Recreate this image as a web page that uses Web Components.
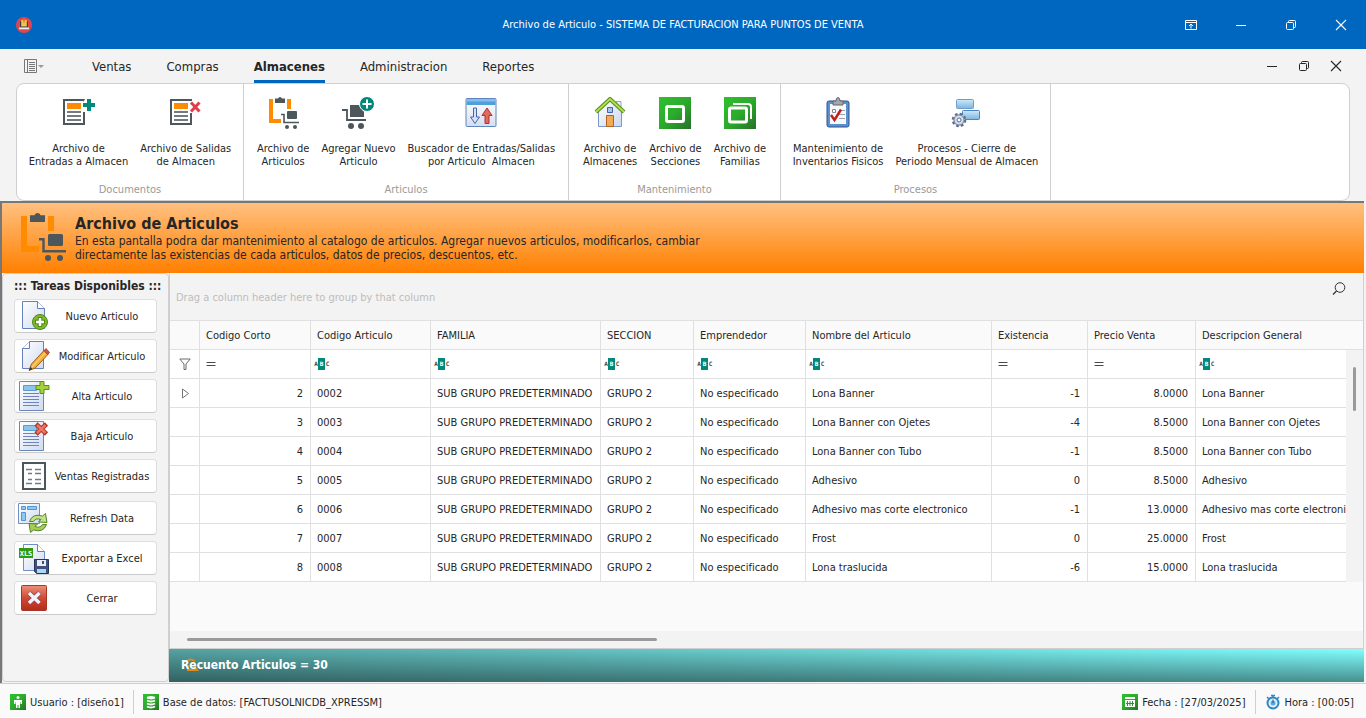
<!DOCTYPE html>
<html lang="es">
<head>
<meta charset="utf-8">
<title>Archivo de Articulo - SISTEMA DE FACTURACION PARA PUNTOS DE VENTA</title>
<style>
  html, body {
    margin: 0;
  }
  body {
    --line: #e0e0e0;
    --edge: #cfcfcf;
    --accent: #0067c0;
    font-family: "DejaVu Sans Condensed", "DejaVu Sans", sans-serif;
    font-size: 11px;
    line-height: 13px;
    color: #262626;
    background: #f3f3f3;
  }
</style>
</head>
<body>
<app-window></app-window>

<script>
const DARK = "#4d565b";

const PAGE = `
  <path d="M1 3h20v24H1z" fill="#fff" stroke="${DARK}" stroke-width="2"/>
  <path d="M4 6h14v6H4z" fill="#ff8c00"/>
  <path d="M4 15h14M4 19h14M4 23h14" stroke="#727b84" stroke-width="2"/>`;

const SHEET = `
  <linearGradient id="s" x2="1" y2="1"><stop stop-color="#fff"/><stop offset="1" stop-color="#cfdbf0"/></linearGradient>`;

const LIST = `${SHEET}
  <path d="M1.500 1.500h24v29h-24z" fill="url(#s)" stroke="#6a86bd"/>
  <path d="M5.500 5.500h13v5h-13z" fill="#8cc4ea" stroke="#5b9bd0"/>
  <path d="M5 13.500h16M5 16.500h16M5 19.500h16M5 22.500h16M5 25.500h16" stroke="#6c84b8"/>`;

const GREEN = `
  <linearGradient id="g" x2="1" y2="1"><stop stop-color="#30c030"/><stop offset=".5" stop-color="#2bab2b"/><stop offset="1" stop-color="#287028"/></linearGradient>`;

// [board size, shapes]
const ICONS = {
    logo: [16, `<circle cx="8" cy="8" r="8" fill="#e0444c"/><path d="M4 4.500h8v6H4z" fill="#33424e"/>
      <path d="M5.200 3h5.600v6.500H5.200z" fill="#f7c04a"/><path d="M7 2.500h2v3H7z" fill="#d8922e"/><path d="M3 10.500h10v1.800H3z" fill="#e8edf2"/>`],
    menu: [20, `<path d="M.5 3.500h12v13H.5zM3.500 3.500v13" fill="none" stroke="#777"/>
      <path d="M5 6.500h6M5 8.500h6M5 10.500h6M5 12.500h6M5 14.500h6" stroke="#777"/><path d="M14 9h6l-3 3z" fill="#999"/>`],
    ribbon: [12, `<path d="M.5 1.500h11v9H.5zM.5 3.500h11" fill="none" stroke="currentColor"/><path d="M6 9.500v-4M4 7l2-2 2 2" fill="none" stroke="currentColor"/>`],
    min: [12, `<path d="M1 6.500h10" stroke="currentColor"/>`],
    restore: [12, `<rect x="1.500" y="3.500" width="7" height="7" rx="1" fill="none" stroke="currentColor"/><path d="M3.500 3V2.500a1 1 0 0 1 1-1h5a1 1 0 0 1 1 1v5a1 1 0 0 1-1 1H9" fill="none" stroke="currentColor"/>`],
    close: [12, `<path d="M1 1l10 10M11 1L1 11" stroke="currentColor" stroke-width="1.100"/>`],
    entradas: [32, `${PAGE}<path d="M19 5h13v6H19zM23 1h5v14h-8V5z" fill="#fff"/><path d="M20 8h12M26 2v12" stroke="#00897b" stroke-width="4"/>`],
    salidas: [32, `${PAGE}<path d="M19 4h12v12H19z" fill="#fff"/><path d="M21 5.500l8.500 9M29.500 5.500l-8.500 9" stroke="#e0404c" stroke-width="3"/>`],
    articulos: [32, `<path d="M2 2h4v20h8v4H2zM20 2h4v10h-4z" fill="#ff8c00"/><path d="M8 6V1.500h3Q11.500 0 13 0t2 1.500h3V6z" fill="${DARK}"/>
      <path fill="none" stroke="${DARK}" stroke-width="1.600" d="M14 17.500h3v8h15"/><rect x="20" y="14" width="10" height="8" rx="1" fill="${DARK}"/>
      <circle cx="20" cy="30" r="2" fill="${DARK}"/><circle cx="28" cy="30" r="2" fill="${DARK}"/>`],
    agregar: [32, `<path fill="none" stroke="${DARK}" stroke-width="1.800" d="M0 13h5v10h19"/><path d="M8 8h9l5 7v5H8z" fill="${DARK}"/>
      <circle cx="9" cy="29" r="3" fill="${DARK}"/><circle cx="19" cy="29" r="3" fill="${DARK}"/>
      <circle cx="25" cy="7" r="7.500" fill="#00897b" stroke="#fff"/><path d="M20.500 7h9M25 2.500v9" stroke="#fff" stroke-width="2"/>`],
    buscador: [32, `<linearGradient id="b" y2="1" x2="0"><stop stop-color="#fff"/><stop offset="1" stop-color="#d5def0"/></linearGradient>
      <rect x="1" y="1.500" width="30" height="28" rx="1" fill="url(#b)" stroke="#5f85bd"/><path d="M1.500 2h29v6h-29z" fill="#4f9fdc"/><path d="M1.500 2h29v2.500h-29z" fill="#83bfe9"/>
      <path d="M8.500 11h3v9h3L10 26.500 5.500 20h3z" fill="#d6e2f8" stroke="#4565a5"/><path d="M20 26.500h4v-8h3L22 11l-5 7.500h3z" fill="#e06a5c" stroke="#b03030"/>`],
    casa: [32, `<linearGradient id="h" x2="1" y2="1"><stop stop-color="#fff"/><stop offset="1" stop-color="#cbd8ef"/></linearGradient>
      <path d="M22 4.500h5v10h-5z" fill="#eef3fb" stroke="#8fa5cf"/><path d="M4.500 14L16 3l11.500 11v15.500h-23z" fill="url(#h)" stroke="#7f97c8"/>
      <path d="M2 15L16 2l14 13" fill="none" stroke="#56901c" stroke-width="4"/><path d="M2 15L16 2l14 13" fill="none" stroke="#b6e04e" stroke-width="1.800"/>
      <path d="M13.500 10.500h5v5h-5z" fill="#a9c4ea" stroke="#4664a5"/><path d="M12.500 18.500h7v11h-7z" fill="#f3aa58" stroke="#b4641a"/>`],
    secciones: [32, `${GREEN}<path d="M0 0h32v32H0z" fill="url(#g)"/><rect x="7.500" y="9.500" width="17" height="15" rx="1.500" fill="none" stroke="#fff" stroke-width="3"/>`],
    familias: [32, `${GREEN}<path d="M0 0h32v32H0z" fill="url(#g)"/><rect x="5.500" y="11" width="17" height="14" rx="1.500" fill="none" stroke="#fff" stroke-width="3"/>
      <path d="M9 7h15q3 0 3 3v12" fill="none" stroke="#fff" stroke-width="2"/>`],
    inventario: [32, `<rect x="5" y="4" width="22" height="26" rx="2" fill="#5a8fd0" stroke="#31538f"/><path d="M8 7h16v20H8z" fill="#f7f9fd"/>
      <path d="M11 8V4h3q0-3.500 2-3.500T18 4h3v4z" fill="#a3a7ad" stroke="#666"/><path d="M17 13.500h6M17 17.500h6M17 21.500h6" stroke="#9aa0a8"/>
      <path d="M10.500 12.500h3v3h-3z" fill="#fff" stroke="#888"/><path d="M9 18l3.500 5L19 12.500" fill="none" stroke="#c3201c" stroke-width="2.500"/>`],
    procesos: [32, `<linearGradient id="p" x2="0" y2="1"><stop stop-color="#cdeafa"/><stop offset="1" stop-color="#7db4e0"/></linearGradient>
      <rect x="5.500" y="2.500" width="17" height="9" rx="1" fill="url(#p)" stroke="#6d9ed0"/><rect x="11.500" y="13.500" width="17" height="9" rx="1" fill="url(#p)" stroke="#4b85c4"/>
      <circle cx="8" cy="23" r="6" fill="#c6d1e4" stroke="#5e6e8c" stroke-width="2.600" stroke-dasharray="2.600 2.100"/>
      <circle cx="8" cy="23" r="5" fill="#d5deed" stroke="#7484a2"/><circle cx="8" cy="23" r="2" fill="#fff" stroke="#5e6e8c"/>`],
    nuevo: [32, `${SHEET}<path d="M4.500 1.500h15l7 7v20h-22z" fill="url(#s)" stroke="#6580bb"/><path d="M19.500 1.500v7h7" fill="#fff" stroke="#6580bb"/>
      <circle cx="22" cy="22" r="7.500" fill="#7fba2c" stroke="#4c8a12"/><path d="M17 22h10M22 17v10" stroke="#4c8a12" stroke-width="4.500"/><path d="M18 22h8M22 18v8" stroke="#fff" stroke-width="2.500"/>`],
    modificar: [32, `${SHEET}<path d="M11.500 1.500h14v27h-21v-20z" fill="url(#s)" stroke="#6580bb"/><path d="M11.500 1.500v7h-7" fill="#fff" stroke="#6580bb"/>
      <path d="M11 30.500l2.500-6.500 13-14 3.800 4-13 14z" fill="#f4b23c" stroke="#9a5d14"/><path d="M26 10.500l2-2 3.500 4-2 2z" fill="#d2554c" stroke="#8c3530" stroke-width=".8"/><path d="M14 27L27 13" stroke="#fbe09a"/><path d="M11 30.500l1.500-3.500 2 2z" fill="#333"/>`],
    alta: [32, `${LIST}<path d="M22 1.500h4v4h5v4h-5v4h-4v-4h-4v-4h4z" fill="#a3d23c" stroke="#588f14"/>`],
    baja: [32, `${LIST}<path d="M18 4l10.500 10M28.500 4L18 14" stroke="#b03524" stroke-width="4.500"/><path d="M19 5l8.500 8M27.500 5L19 13" stroke="#ef7563" stroke-width="2.500"/>`],
    ventas: [32, `<path d="M5 3h22v26H5z" fill="#fff" stroke="${DARK}" stroke-width="2"/><path d="M8 9.500h6M10 13.500h4M10 19.500h4M8 23.500h6M17 9.500h6M17 13.500h6M17 19.500h6M17 23.500h6" stroke="#727b84" stroke-width="1.600"/>`],
    refresh: [32, `${SHEET}<path d="M.5 1.500h21v20H.5z" fill="url(#s)" stroke="#6f8fc6"/><path d="M3.500 4.500h4v3h-4zM9.500 4.500h9v3h-9zM3.500 10.500h4v8h-4z" fill="#8cc8ef" stroke="#5596cf"/>
      <path d="M11.500 19.500q3-8.500 13-5.500l3-2.500 1.500 9-8.500-.5 2.500-2.500q-5-2-7.500 2z" fill="#c2e08e" stroke="#55852a"/><path d="M28.500 22.500q-3 8.500-13 5.500l-3 2.500-1.500-9 8.500.5-2.500 2.500q5 2 7.500-2z" fill="#a6cd52" stroke="#55852a"/>`],
    excel: [32, `${SHEET}<path d="M5.500 2.500h14l7 7v19h-21z" fill="url(#s)" stroke="#6f8fc6"/><path d="M19.500 2.500v7h7" fill="#fff" stroke="#6580bb"/>
      <path d="M1 6h14v10H1z" fill="#2f9a12"/><text x="8" y="14" font-family="DejaVu Sans Mono" font-size="7" font-weight="bold" text-anchor="middle" fill="#fff">XLS</text>
      <path d="M16.500 17.500h14v14h-12l-2-2z" fill="#40507c" stroke="#27345c"/><path d="M19 18h9v6h-9z" fill="#e6edf8"/><path d="M24 19h2v3h-2z" fill="#40507c"/><path d="M19 27h9v4h-9z" fill="#a8d8f6"/>`],
    cerrar: [32, `<linearGradient id="c" x2="0" y2="1"><stop stop-color="#ec9078"/><stop offset=".5" stop-color="#d04a34"/><stop offset="1" stop-color="#b52a1c"/></linearGradient>
      <rect x="3.500" y="3.500" width="25" height="25" rx="1" fill="url(#c)" stroke="#a63626"/><path d="M11 11l10.500 10M21.500 11L11 21" stroke="#8d3f4a" stroke-width="5"/><path d="M11 11l10.500 10M21.500 11L11 21" stroke="#f0f4fb" stroke-width="3.500"/>`],
    search: [16, `<circle cx="9" cy="6.500" r="4.800" fill="none" stroke="#333"/><path d="M5.500 10L2 13.500" stroke="#333" stroke-width="1.200"/>`],
    filter: [12, `<path d="M.8 1h10.400L7 6v5.500H5V6z" fill="none" stroke="#6b6b6b"/>`],
    equals: [10, `<path d="M.5 3.500h9M.5 6.500h9" stroke="#4a4a4a"/>`],
    abc: [16, `<path d="M4 2h7v12H4z" fill="#00897b"/><g font-family="DejaVu Sans Mono" font-size="6" font-weight="bold" text-anchor="middle"><text x="2" y="10" fill="#444">A</text><text x="7.500" y="10" fill="#fff">B</text><text x="13.500" y="10" fill="#444">C</text></g>`],
    arrow: [12, `<path d="M3.500 2l6 4.500-6 4.500z" fill="none" stroke="#777"/>`],
    swirl: [16, `<path d="M3 4q3-3 8 0M4 8v5h9l-3-4" fill="none" stroke="#e08b18" stroke-width="2"/>`],
    user: [16, `${GREEN}<path d="M0 0h16v16H0z" fill="url(#g)"/><circle cx="8" cy="3.500" r="1.500" fill="#fff"/><path d="M4 6h8v4h-1.500V8H10v6H8.500v-3h-1v3H6V8h-.5v2H4z" fill="#fff"/>`],
    db: [16, `${GREEN}<path d="M0 0h16v16H0z" fill="url(#g)"/><path d="M4 3.500q4 2 8 0M4 6.500q4 2 8 0M4 9.500q4 2 8 0M4 12.500q4 2 8 0" fill="none" stroke="#fff" stroke-width="1.800"/><ellipse cx="8" cy="3.500" rx="4" ry="1.500" fill="#fff"/>`],
    calendar: [16, `${GREEN}<path d="M0 0h16v16H0z" fill="url(#g)"/><path d="M3 3h10v2H3z" fill="#fff"/><path d="M3 6h10v7H3z" fill="#fff"/><path d="M5.500 7v5M8 7v5M10.500 7v5M4 9.500h8" stroke="#2a922a"/>`],
    clock: [16, `<circle cx="8" cy="9" r="5.500" fill="#e3f3fc" stroke="#2f86c3" stroke-width="2"/><path d="M6 1.500h4M8 1v3M2 3l2 2M14 3l-2 2" stroke="#2f86c3" stroke-width="1.500"/><circle cx="8" cy="9" r="2.500" fill="#57a9dc"/><path d="M8 5.500V9" stroke="#1d5f96"/>`]
};

class UiIcon extends HTMLElement {
    constructor() {
        super();
        this.attachShadow({mode: "open"});
    }

    connectedCallback() {
        const [box, shapes] = ICONS[this.getAttribute("name")];
        const size = this.getAttribute("size") || box;
        this.shadowRoot.innerHTML = `
        <style>
          :host{ display:inline-flex; flex:none; }
          svg{ display:block; }
        </style>
        <svg width="${size}" height="${size}" viewBox="0 0 ${box} ${box}" aria-hidden="true">${shapes}</svg>`;
    }
}
customElements.define("ui-icon", UiIcon);

class TitleBar extends HTMLElement {
    constructor() {
        super();
        this.attachShadow({mode: "open"}).innerHTML = `
        <style>
          :host{ display:grid; grid-template-columns:200px 1fr 200px; align-items:center; height:49px; background:var(--accent); color:#fff; }
          .logo{ padding-left:16px; display:flex; }
          h1{ margin:0; font-size:11px; font-weight:normal; text-align:center; }
          nav{ display:flex; }
          button{ flex:1; height:49px; border:0; padding:0; background:none; color:inherit; display:flex; align-items:center; justify-content:center; }
        </style>
        <span class="logo"><ui-icon name="logo"></ui-icon></span>
        <h1><slot></slot></h1>
        <nav>
          <button aria-label="Cinta"><ui-icon name="ribbon"></ui-icon></button>
          <button aria-label="Minimizar"><ui-icon name="min"></ui-icon></button>
          <button aria-label="Restaurar"><ui-icon name="restore"></ui-icon></button>
          <button aria-label="Salir"><ui-icon name="close"></ui-icon></button>
        </nav>`;
    }
}
customElements.define("title-bar", TitleBar);

class RibbonTabs extends HTMLElement {
    constructor() {
        super();
        this.attachShadow({mode: "open"});
    }

    connectedCallback() {
        const tabs = this.getAttribute("tabs").split(",");
        const active = this.getAttribute("active");
        this.shadowRoot.innerHTML = `
        <style>
          :host{ display:flex; align-items:stretch; height:34px; padding:0 14px 0 24px; }
          button{ border:0; padding:0; background:none; color:inherit; font:inherit; display:flex; align-items:center; justify-content:center; }
          .tabs{ display:flex; flex:1; gap:35px; margin-left:48px; }
          .tabs button{ font-size:13px; border-top:3px solid transparent; border-bottom:3px solid transparent; }
          .tabs .on{ font-weight:bold; border-bottom-color:var(--accent); }
          .win{ width:32px; }
        </style>
        <button aria-label="Menu"><ui-icon name="menu"></ui-icon></button>
        <div class="tabs">${
            tabs.map(t => `<button class="${t === active ? "on" : ""}">${t}</button>`).join("")
        }</div>
        <button class="win" aria-label="Minimizar"><ui-icon name="min"></ui-icon></button>
        <button class="win" aria-label="Restaurar"><ui-icon name="restore"></ui-icon></button>
        <button class="win" aria-label="Cerrar ventana"><ui-icon name="close"></ui-icon></button>`;
    }
}
customElements.define("ribbon-tabs", RibbonTabs);

class RibbonGroup extends HTMLElement {
    constructor() {
        super();
        this.attachShadow({mode: "open"});
    }

    connectedCallback() {
        this.shadowRoot.innerHTML = `
        <style>
          :host{ display:flex; flex-direction:column; box-sizing:border-box; border-right:1px solid var(--edge); }
          .items{ display:flex; flex:1; justify-content:center; gap:12px; padding-top:13px; }
          .caption{ text-align:center; color:#9a9a9a; padding-bottom:4px; }
        </style>
        <div class="items"><slot></slot></div>
        <div class="caption">${this.getAttribute("caption")}</div>`;
    }
}
customElements.define("ribbon-group", RibbonGroup);

class RibbonItem extends HTMLElement {
    constructor() {
        super();
        this.attachShadow({mode: "open"});
    }

    connectedCallback() {
        this.shadowRoot.innerHTML = `
        <style>
          :host{ display:block; }
          button{ display:flex; flex-direction:column; align-items:center; gap:13px; border:0; padding:0; background:none; color:inherit; font:inherit; white-space:pre; }
        </style>
        <button><ui-icon name="${this.getAttribute("icon")}"></ui-icon><span><slot></slot></span></button>`;
    }
}
customElements.define("ribbon-item", RibbonItem);

class AppRibbon extends HTMLElement {
    constructor() {
        super();
        this.attachShadow({mode: "open"}).innerHTML = `
        <style>
          :host{ display:flex; box-sizing:border-box; height:118px; margin:0 16px; background:#fff; border:1px solid var(--edge); border-radius:8px; }
          .g1{ width:227px; } .g2{ width:325px; } .g3{ width:212px; } .g4{ width:270px; }
        </style>
        <ribbon-group class="g1" caption="Documentos">
          <ribbon-item icon="entradas">Archivo de<br>Entradas a Almacen</ribbon-item>
          <ribbon-item icon="salidas">Archivo de Salidas<br>de Almacen</ribbon-item>
        </ribbon-group>
        <ribbon-group class="g2" caption="Articulos">
          <ribbon-item icon="articulos">Archivo de<br>Articulos</ribbon-item>
          <ribbon-item icon="agregar">Agregar Nuevo<br>Articulo</ribbon-item>
          <ribbon-item icon="buscador">Buscador de Entradas/Salidas<br>por Articulo  Almacen</ribbon-item>
        </ribbon-group>
        <ribbon-group class="g3" caption="Mantenimiento">
          <ribbon-item icon="casa">Archivo de<br>Almacenes</ribbon-item>
          <ribbon-item icon="secciones">Archivo de<br>Secciones</ribbon-item>
          <ribbon-item icon="familias">Archivo de<br>Familias</ribbon-item>
        </ribbon-group>
        <ribbon-group class="g4" caption="Procesos">
          <ribbon-item icon="inventario">Mantenimiento de<br>Inventarios Fisicos</ribbon-item>
          <ribbon-item icon="procesos">Procesos - Cierre de<br>Periodo Mensual de Almacen</ribbon-item>
        </ribbon-group>`;
    }
}
customElements.define("app-ribbon", AppRibbon);

class PageBanner extends HTMLElement {
    constructor() {
        super();
        this.attachShadow({mode: "open"}).innerHTML = `
        <style>
          :host{ display:flex; gap:9px; box-sizing:border-box; height:70px; padding:10px 16px; background:linear-gradient(#ffc080,#ff8000); }
          h2{ margin:0; font-size:16px; line-height:21px; }
          p{ margin:0; font-size:12px; line-height:14px; }
        </style>
        <ui-icon name="articulos" size="48"></ui-icon>
        <div>
          <h2>Archivo de Articulos</h2>
          <p>En esta pantalla podra dar mantenimiento al catalogo de articulos. Agregar nuevos articulos, modificarlos, cambiar<br>directamente las existencias de cada articulos, datos de precios, descuentos, etc.</p>
        </div>`;
    }
}
customElements.define("page-banner", PageBanner);

class TaskButton extends HTMLElement {
    constructor() {
        super();
        this.attachShadow({mode: "open"});
    }

    connectedCallback() {
        this.shadowRoot.innerHTML = `
        <style>
          :host{ display:block; }
          button{ display:flex; align-items:center; width:100%; height:34px; box-sizing:border-box; padding:0 2px 0 3px; border:1px solid #dedede; border-bottom-color:#cacaca; border-radius:4px; background:#fff; color:inherit; font:inherit; white-space:nowrap; }
          span{ flex:1; text-align:center; }
        </style>
        <button><ui-icon name="${this.getAttribute("icon")}"></ui-icon><span><slot></slot></span></button>`;
    }
}
customElements.define("task-button", TaskButton);

class TaskPanel extends HTMLElement {
    constructor() {
        super();
        this.attachShadow({mode: "open"}).innerHTML = `
        <style>
          :host{ display:flex; flex-direction:column; gap:6px; box-sizing:border-box; width:167px; padding:5px 11px; border:1px solid var(--edge); border-radius:4px; }
          h3{ margin:0; font-size:12px; line-height:14px; text-align:center; white-space:nowrap; }
          .second{ margin-top:2px; }
        </style>
        <h3>::: Tareas Disponibles :::</h3>
        <task-button icon="nuevo">Nuevo Articulo</task-button>
        <task-button icon="modificar">Modificar Articulo</task-button>
        <task-button icon="alta">Alta Articulo</task-button>
        <task-button icon="baja">Baja Articulo</task-button>
        <task-button icon="ventas">Ventas Registradas</task-button>
        <task-button class="second" icon="refresh">Refresh Data</task-button>
        <task-button icon="excel">Exportar a Excel</task-button>
        <task-button icon="cerrar">Cerrar</task-button>`;
    }
}
customElements.define("task-panel", TaskPanel);

const COLUMNS = [
    {title: "Codigo Corto", width: 111, number: true},
    {title: "Codigo Articulo", width: 120},
    {title: "FAMILIA", width: 170},
    {title: "SECCION", width: 93},
    {title: "Emprendedor", width: 112},
    {title: "Nombre del Articulo", width: 186},
    {title: "Existencia", width: 96, number: true},
    {title: "Precio Venta", width: 108, number: true},
    {title: "Descripcion General"}
];

const ARTICLES = [
    [2, "0002", "Lona Banner", -1, "8.0000"],
    [3, "0003", "Lona Banner con Ojetes", -4, "8.5000"],
    [4, "0004", "Lona Banner con Tubo", -1, "8.5000"],
    [5, "0005", "Adhesivo", 0, "8.5000"],
    [6, "0006", "Adhesivo mas corte electronico", -1, "13.0000"],
    [7, "0007", "Frost", 0, "25.0000"],
    [8, "0008", "Lona traslucida", -6, "15.0000"]
].map(([id, code, name, stock, price]) => [
    id, code, "SUB GRUPO PREDETERMINADO", "GRUPO 2", "No especificado", name, stock, price, name
]);

class DataGrid extends HTMLElement {
    constructor() {
        super();
        this.attachShadow({mode: "open"}).innerHTML = `
        <style>
          :host{ display:flex; flex-direction:column; min-width:0; background:#fafafa; border-left:1px solid var(--edge); border-right:1px solid var(--edge); }
          .group{ display:flex; justify-content:space-between; align-items:center; height:45px; padding:2px 16px 0 6px; border-bottom:1px solid var(--line); background:#f3f3f3; color:#bdbdbd; }
          .group button{ border:0; padding:6px 0 0; background:none; align-self:flex-start; }
          .view{ display:flex; }
          .clip{ flex:1; min-width:0; overflow:hidden; }
          table{ width:100%; table-layout:fixed; border-collapse:separate; border-spacing:0; }
          th, td{ height:29px; box-sizing:border-box; padding:0 7px 0 6px; font-weight:normal; text-align:left; white-space:nowrap; overflow:hidden; border-right:1px solid var(--line); border-bottom:1px solid var(--line); }
          th:last-child, td:last-child{ border-right:0; padding-right:0; }
          th{ background:#fafafa; }
          td{ background:#fff; }
          td.n{ text-align:right; }
          .mark{ padding:0; text-align:center; line-height:0; }
          .cell{ display:flex; align-items:center; gap:2px; }
          .filters td{ padding-left:3px; }
          .filters td.n{ padding-left:6px; }
          .filters td.mark{ padding:0; }
          input{ flex:1; min-width:0; width:0; border:0; padding:0; background:none; font:inherit; outline:0; }
          .gutter{ width:17px; display:flex; flex-direction:column; background:#f3f3f3; }
          .gutter i{ box-sizing:border-box; height:29px; background:#fafafa; border-bottom:1px solid var(--line); }
          .gutter b{ width:3px; height:44px; margin:17px 0 0 7px; border-radius:2px; background:#9a9a9a; }
          .rest{ flex:1; }
          .hscroll{ display:flex; align-items:center; height:17px; background:#f3f3f3; padding-left:17px; }
          .hscroll b{ width:40%; height:3px; border-radius:2px; background:#9a9a9a; }
        </style>
        <div class="group"><span>Drag a column header here to group by that column</span><button aria-label="Buscar"><ui-icon name="search"></ui-icon></button></div>
        <div class="view">
          <div class="clip">
            <table>
              <colgroup><col style="width:30px">${
                COLUMNS.map(c => c.width ? `<col style="width:${c.width}px">` : "<col>").join("")
              }</colgroup>
              <thead><tr><th></th>${
                COLUMNS.map(c => `<th>${c.title}</th>`).join("")
              }</tr></thead>
              <tbody>
                <tr class="filters"><td class="mark"><ui-icon name="filter"></ui-icon></td>${
                  COLUMNS.map(c => `<td class="${c.number ? "n" : ""}"><div class="cell"><ui-icon name="${c.number ? "equals" : "abc"}"></ui-icon><input aria-label="${c.title}"></div></td>`).join("")
                }</tr>
                ${
                  ARTICLES.map((row, i) => `<tr><td class="mark">${i === 0 ? `<ui-icon name="arrow"></ui-icon>` : ""}</td>${
                    row.map((v, k) => `<td class="${COLUMNS[k].number ? "n" : ""}">${v}</td>`).join("")
                  }</tr>`).join("")
                }
              </tbody>
            </table>
          </div>
          <div class="gutter"><i></i><b></b></div>
        </div>
        <div class="rest"></div>
        <div class="hscroll"><b></b></div>`;
    }
}
customElements.define("data-grid", DataGrid);

class CountBar extends HTMLElement {
    constructor() {
        super();
        this.attachShadow({mode: "open"}).innerHTML = `
        <style>
          :host{ position:relative; display:flex; align-items:center; box-sizing:border-box; height:34px; padding-left:12px; border-top:1px solid var(--edge);
            background:linear-gradient(rgba(16,32,32,0), rgba(16,32,32,.5)), linear-gradient(to right,#55a2a2,#80ffff); color:#fff; font-size:12px; font-weight:bold; }
          ui-icon{ position:absolute; left:15px; top:8px; }
          span{ position:relative; }
        </style>
        <ui-icon name="swirl"></ui-icon><span><slot></slot></span>`;
    }
}
customElements.define("count-bar", CountBar);

class StatusItem extends HTMLElement {
    constructor() {
        super();
        this.attachShadow({mode: "open"});
    }

    connectedCallback() {
        this.shadowRoot.innerHTML = `
        <style>
          :host{ display:flex; align-items:center; gap:4px; height:24px; white-space:nowrap; }
        </style>
        <ui-icon name="${this.getAttribute("icon")}"></ui-icon><slot></slot>`;
    }
}
customElements.define("status-item", StatusItem);

class StatusBar extends HTMLElement {
    constructor() {
        super();
        this.attachShadow({mode: "open"}).innerHTML = `
        <style>
          :host{ display:flex; align-items:center; box-sizing:border-box; height:35px; padding:2px 12px 0 10px; background:#fafafa; border-top:1px solid var(--edge); }
          i{ width:1px; height:24px; margin:0 9px; background:var(--edge); }
          .push{ margin-left:auto; }
        </style>
        <status-item icon="user">Usuario : [diseño1]</status-item><i></i>
        <status-item icon="db">Base de datos: [FACTUSOLNICDB_XPRESSM]</status-item>
        <status-item class="push" icon="calendar">Fecha : [27/03/2025]</status-item><i></i>
        <status-item icon="clock">Hora : [00:05]</status-item>`;
    }
}
customElements.define("status-bar", StatusBar);

class AppWindow extends HTMLElement {
    constructor() {
        super();
        this.attachShadow({mode: "open"}).innerHTML = `
        <style>
          :host{ display:flex; flex-direction:column; min-height:100vh; }
          main{ flex:1; display:flex; flex-direction:column; box-sizing:border-box; margin-right:2px; border-top:2px solid #777; border-left:2px solid #777; padding-bottom:1px; }
          .work{ flex:1; display:flex; }
          .content{ flex:1; min-width:0; display:flex; flex-direction:column; }
          data-grid{ flex:1; }
        </style>
        <title-bar>Archivo de Articulo - SISTEMA DE FACTURACION PARA PUNTOS DE VENTA</title-bar>
        <ribbon-tabs tabs="Ventas,Compras,Almacenes,Administracion,Reportes" active="Almacenes"></ribbon-tabs>
        <app-ribbon></app-ribbon>
        <main>
          <page-banner></page-banner>
          <div class="work">
            <task-panel></task-panel>
            <div class="content">
              <data-grid></data-grid>
              <count-bar>Recuento Articulos = 30</count-bar>
            </div>
          </div>
        </main>
        <status-bar></status-bar>`;
    }
}
customElements.define("app-window", AppWindow);
</script>
</body>
</html>
